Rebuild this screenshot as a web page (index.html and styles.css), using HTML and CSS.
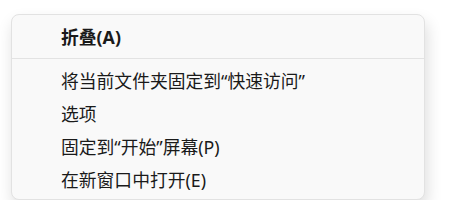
FILE: index.html
```html
<!DOCTYPE html>
<html>
<head>
    <title>Context Menu</title>
    <link rel="stylesheet" href="styles.css">
</head>
<body>
    <div class="menu">
        <div class="menu-item title">折叠(A)</div>
        <div class="separator"></div>
        <div class="menu-item">将当前文件夹固定到“快速访问”</div>
        <div class="menu-item">选项</div>
        <div class="menu-item">固定到“开始”屏幕(P)</div>
        <div class="menu-item">在新窗口中打开(E)</div>
    </div>
</body>
</html>
```

FILE: styles.css
```css
body {
    margin: 0;
    padding: 14px 0 0 11px;
    background: #ffffff;
    font-family: "Noto Sans", "Noto Sans CJK SC", sans-serif;
    color: #1a1a1a;
}
.menu {
    box-sizing: border-box;
    width: 414px;
    height: 186px;
    background: #f9f9f9;
    border: 1px solid #e2e2e2;
    border-radius: 8px;
    box-shadow: 2px 8px 16px rgba(0, 0, 0, 0.14);
    padding-top: 4px;
}
.menu-item {
    height: 33px;
    line-height: 33px;
    padding-left: 49px;
    font-size: 17.8px;
    white-space: nowrap;
}
.title {
    height: 36px;
    line-height: 36px;
    font-weight: bold;
}
.separator {
    height: 1px;
    background: #e3e3e3;
    margin: 3px 0 6px 0;
}
```
